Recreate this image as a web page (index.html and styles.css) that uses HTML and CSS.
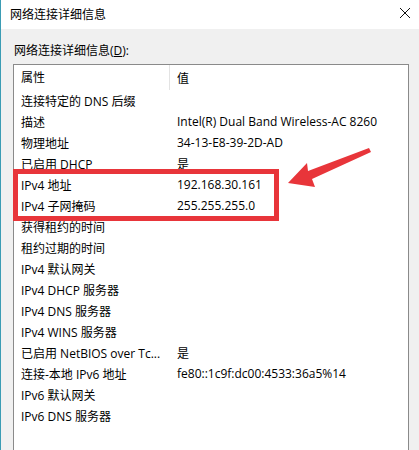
FILE: index.html
```html
<!DOCTYPE html>
<html lang="zh-CN">
<head>
    <meta charset="UTF-8">
    <title>网络连接详细信息</title>
    <link rel="stylesheet" href="styles.css">
</head>
<body>
    <div class="window">
        <div class="titlebar">
            <span class="title">网络连接详细信息</span>
            <svg class="close" width="12" height="12" viewBox="0 0 12 12">
                <path d="M1 1L11 11M11 1L1 11" stroke="#111" stroke-width="1" fill="none"/>
            </svg>
        </div>
        <div class="content">
            <p class="label">网络连接详细信息(<u>D</u>):</p>
            <div class="listbox">
                <div class="row head">
                    <span class="cell name">属性</span>
                    <span class="cell value">值</span>
                </div>
                <div class="row"><span class="cell name">连接特定的 DNS 后缀</span><span class="cell value"></span></div>
                <div class="row"><span class="cell name">描述</span><span class="cell value">Intel(R) Dual Band Wireless-AC 8260</span></div>
                <div class="row"><span class="cell name">物理地址</span><span class="cell value">34-13-E8-39-2D-AD</span></div>
                <div class="row"><span class="cell name">已启用 DHCP</span><span class="cell value">是</span></div>
                <div class="row"><span class="cell name">IPv4 地址</span><span class="cell value">192.168.30.161</span></div>
                <div class="row"><span class="cell name">IPv4 子网掩码</span><span class="cell value">255.255.255.0</span></div>
                <div class="row"><span class="cell name">获得租约的时间</span><span class="cell value"></span></div>
                <div class="row"><span class="cell name">租约过期的时间</span><span class="cell value"></span></div>
                <div class="row"><span class="cell name">IPv4 默认网关</span><span class="cell value"></span></div>
                <div class="row"><span class="cell name">IPv4 DHCP 服务器</span><span class="cell value"></span></div>
                <div class="row"><span class="cell name">IPv4 DNS 服务器</span><span class="cell value"></span></div>
                <div class="row"><span class="cell name">IPv4 WINS 服务器</span><span class="cell value"></span></div>
                <div class="row"><span class="cell name">已启用 NetBIOS over Tc...</span><span class="cell value">是</span></div>
                <div class="row"><span class="cell name">连接-本地 IPv6 地址</span><span class="cell value">fe80::1c9f:dc00:4533:36a5%14</span></div>
                <div class="row"><span class="cell name">IPv6 默认网关</span><span class="cell value"></span></div>
                <div class="row"><span class="cell name">IPv6 DNS 服务器</span><span class="cell value"></span></div>
            </div>
        </div>

        <!-- annotation over the screenshot -->
        <div class="mark"></div>
        <svg class="arrow" width="100" height="50" viewBox="0 0 100 50">
            <polygon points="97,1 99,5 40,32 43,40 16,36 35,16 36,24" fill="#e8353a"/>
        </svg>
    </div>
</body>
</html>
```

FILE: styles.css
```css
html, body {
    margin: 0;
    padding: 0;
}

body {
    font-family: "Open Sans", "Noto Sans CJK SC", sans-serif;
    font-size: 12px;
    color: #000;
    background: #f0f0f0;
}

.window {
    position: relative;
    width: 419px;
    height: 450px;
    box-sizing: border-box;
    border-left: 1px solid #3b9cb4;
    overflow: hidden;
    display: flex;
    flex-direction: column;
}

.titlebar {
    height: 29px;
    flex: none;
    background: #fff;
    display: flex;
    align-items: center;
    justify-content: space-between;
    padding: 0 8px 3px 9px;
    box-sizing: border-box;
}

.title {
    font-family: "Noto Sans CJK SC", sans-serif;
    font-size: 12px;
}

.close {
    display: block;
}

.content {
    flex: 1;
    padding: 13px 10px 0 12px;
    display: flex;
    flex-direction: column;
}

.label {
    margin: 0 0 4px 1px;
    line-height: 18px;
}

.listbox {
    flex: 1;
    background: #fff;
    border: 1px solid #8a8a8a;
    border-bottom: none;
}

.row {
    display: grid;
    grid-template-columns: 156px 1fr;
    height: 21px;
    align-items: center;
    white-space: nowrap;
}

.row.head {
    height: 25px;
}

.row.head .name {
    border-right: 1px solid #e3e3e3;
    height: 25px;
    line-height: 25px;
}

.cell {
    padding-left: 7px;
    overflow: hidden;
}

.value {
    padding-left: 7px;
}

.mark {
    position: absolute;
    left: 13px;
    top: 170px;
    width: 256px;
    height: 42px;
    border: 5px solid #e8353a;
    box-sizing: content-box;
    margin: -1px 0 0 -1px;
}

.arrow {
    position: absolute;
    left: 271px;
    top: 147px;
}
```
